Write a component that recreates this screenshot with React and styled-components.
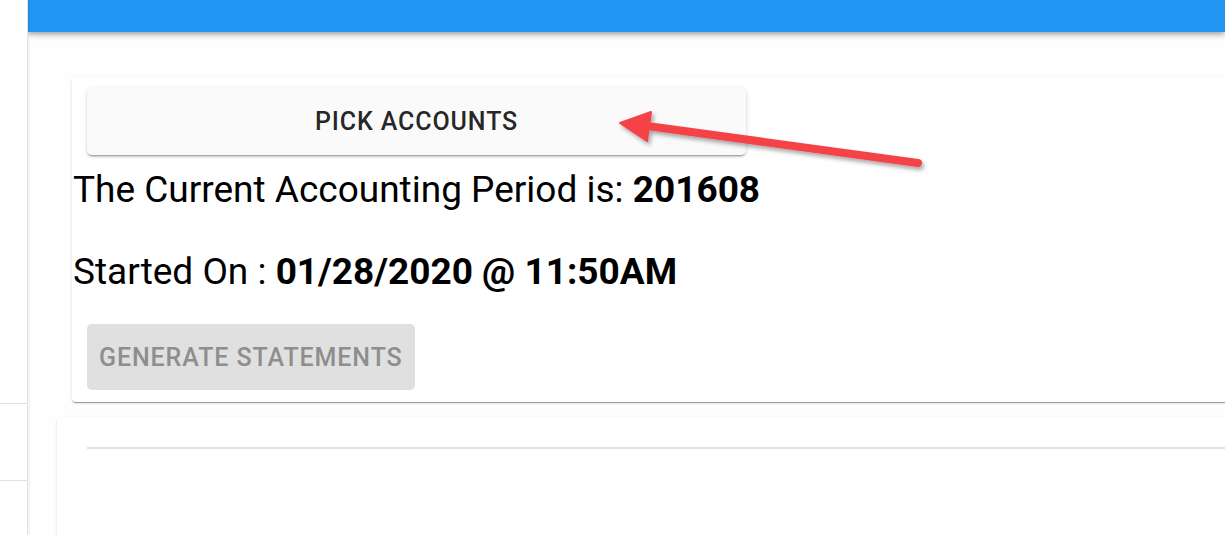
import React from "react";
import styled, { createGlobalStyle } from "styled-components";

const Global = createGlobalStyle`
  html, body { margin: 0; padding: 0; background: #ffffff; }
  body { font-family: Roboto, "Noto Sans", Arial, sans-serif; }
`;

const Page = styled.div`
  position: relative;
  display: flex;
  width: 1225px;
  height: 535px;
  overflow: hidden;
  background: #ffffff;
`;

const Sidebar = styled.aside`
  width: 27px;
  flex: none;
  display: flex;
  flex-direction: column;
  border-right: 1px solid #e3e3e3;
  box-shadow: 1px 0 3px rgba(0, 0, 0, 0.08);
  background: #ffffff;
  z-index: 2;
`;

const SideSpacer = styled.div`
  height: 403px;
  flex: none;
`;

const SideRow = styled.div`
  height: 76px;
  flex: none;
  border-top: 1px solid #e0e0e0;
  border-bottom: 1px solid #e0e0e0;
`;

const Main = styled.main`
  flex: 1;
  min-width: 0;
  display: flex;
  flex-direction: column;
  background: #fefefe;
`;

const AppBar = styled.header`
  height: 32px;
  flex: none;
  background: #2196f3;
  box-shadow: 0 2px 4px -1px rgba(0, 0, 0, 0.2), 0 4px 5px 0 rgba(0, 0, 0, 0.14),
    0 1px 10px 0 rgba(0, 0, 0, 0.12);
  z-index: 1;
`;

const Content = styled.div`
  display: flex;
  flex-direction: column;
  padding-top: 45px;
  gap: 15px;
`;

const Card = styled.section`
  margin-left: ${(p) => p.$indent}px;
  margin-right: -20px;
  background: #ffffff;
  border-radius: 4px;
  box-shadow: 0 2px 1px -1px rgba(0, 0, 0, 0.25), 0 1px 1px 0 rgba(0, 0, 0, 0.14),
    0 1px 3px 0 rgba(0, 0, 0, 0.12);
`;

const PeriodCard = styled(Card)`
  display: flex;
  flex-direction: column;
  align-items: flex-start;
  padding: 11px 0 12px 1px;
`;

const PickButton = styled.button`
  margin-left: 14px;
  width: 659px;
  height: 67px;
  border: none;
  border-radius: 5px;
  background: #fafafa;
  color: rgba(0, 0, 0, 0.87);
  font-family: Roboto, Arial, sans-serif;
  font-size: 25px;
  font-weight: 500;
  letter-spacing: 0.9px;
  text-transform: uppercase;
  box-shadow: 0 3px 1px -2px rgba(0, 0, 0, 0.2), 0 2px 2px 0 rgba(0, 0, 0, 0.14),
    0 1px 5px 0 rgba(0, 0, 0, 0.12);
  cursor: pointer;
`;

const InfoLine = styled.p`
  margin: ${(p) => p.$top}px 0 0 0;
  font-size: 37px;
  line-height: 44px;
  color: #000000;
  font-weight: 400;
`;

const Strong = styled.b`
  font-weight: 700;
`;

const DisabledButton = styled.button`
  margin: 30px 0 0 14px;
  height: 66px;
  padding: 0 12px;
  border: none;
  border-radius: 5px;
  background: #e0e0e0;
  color: #8e8e8e;
  font-family: Roboto, Arial, sans-serif;
  font-size: 25px;
  font-weight: 500;
  letter-spacing: 0.9px;
  text-transform: uppercase;
`;

const TableCard = styled(Card)`
  height: 200px;
  padding: 30px 0 0 30px;
`;

const Divider = styled.hr`
  margin: 0;
  border: none;
  border-top: 2px solid #e0e0e0;
`;

const ArrowLayer = styled.svg`
  position: absolute;
  left: 0;
  top: 0;
  pointer-events: none;
  overflow: visible;
`;

export default function App() {
  return (
    <>
      <Global />
      <Page>
        <Sidebar>
          <SideSpacer />
          <SideRow />
        </Sidebar>
        <Main>
          <AppBar />
          <Content>
            <PeriodCard $indent={44}>
              <PickButton>Pick Accounts</PickButton>
              <InfoLine $top={13}>
                The Current Accounting Period is: <Strong>201608</Strong>
              </InfoLine>
              <InfoLine $top={38}>
                Started On : <Strong>01/28/2020 @ 11:50AM</Strong>
              </InfoLine>
              <DisabledButton disabled>Generate Statements</DisabledButton>
            </PeriodCard>
            <TableCard $indent={29}>
              <Divider />
            </TableCard>
          </Content>
        </Main>
        <ArrowLayer width="1225" height="535" viewBox="0 0 1225 535">
          <defs>
            <filter id="arrowShadow" x="-10%" y="-50%" width="120%" height="200%">
              <feDropShadow dx="2" dy="3" stdDeviation="2" floodColor="#000" floodOpacity="0.35" />
            </filter>
          </defs>
          <g filter="url(#arrowShadow)" fill="#f44346" stroke="#f44346">
            <line x1="918" y1="163" x2="640" y2="125" strokeWidth="8" strokeLinecap="round" />
            <polygon points="620,123 651,112 647,141" strokeWidth="2" strokeLinejoin="round" />
          </g>
        </ArrowLayer>
      </Page>
    </>
  );
}
